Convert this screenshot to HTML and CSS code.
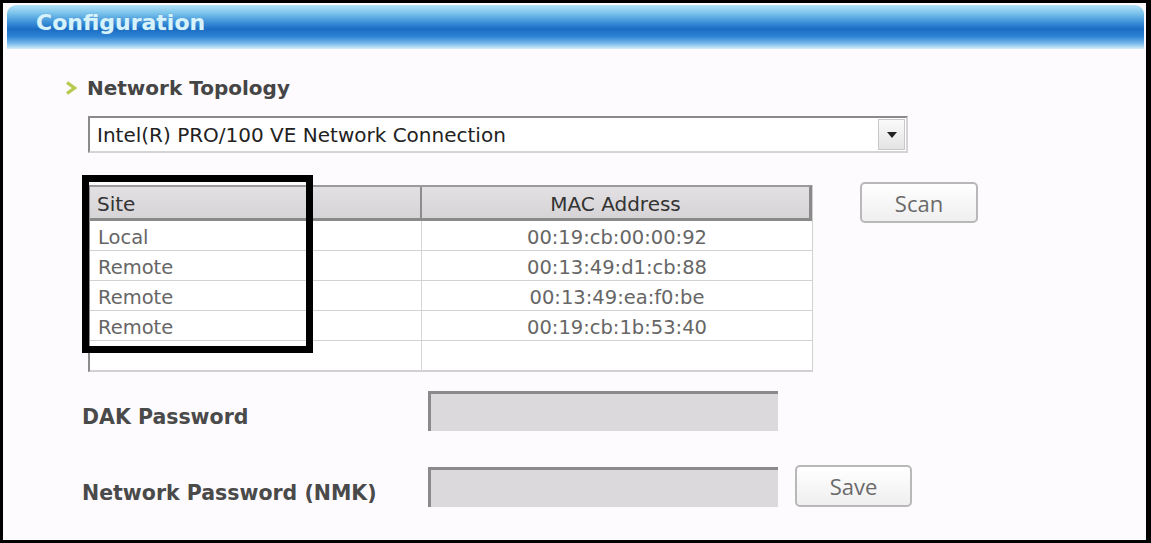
FILE: index.html
```html
<!DOCTYPE html>
<html>
<head>
<meta charset="utf-8">
<link rel="stylesheet" href="styles.css">
</head>
<body>
<div class="frame">
  <div class="header">Configuration</div>
  <div class="content">
    <div class="section-title">
      <svg class="chev" width="12" height="16" viewBox="0 0 12 16"><path d="M2 2.5 L9.5 8 L2 13.5" fill="none" stroke="#b6ca4e" stroke-width="3.4" stroke-linejoin="miter"/></svg>
      <span>Network Topology</span>
    </div>
    <div class="select">
      <span class="select-text">Intel(R) PRO/100 VE Network Connection</span>
      <span class="select-btn"><svg width="12" height="8" viewBox="0 0 12 8"><path d="M1 1 H11 L6 7 Z" fill="#222"/></svg></span>
    </div>
    <div class="table-row">
      <div class="grid">
        <div class="grid-head">
          <div class="c1">Site</div>
          <div class="c2">MAC Address</div>
        </div>
        <div class="grid-line"><div class="c1">Local</div><div class="c2">00:19:cb:00:00:92</div></div>
        <div class="grid-line"><div class="c1">Remote</div><div class="c2">00:13:49:d1:cb:88</div></div>
        <div class="grid-line"><div class="c1">Remote</div><div class="c2">00:13:49:ea:f0:be</div></div>
        <div class="grid-line"><div class="c1">Remote</div><div class="c2">00:19:cb:1b:53:40</div></div>
        <div class="grid-line"><div class="c1"></div><div class="c2"></div></div>
        <div class="highlight"></div>
      </div>
      <div class="btn scan">Scan</div>
    </div>
    <div class="field dak">
      <div class="label">DAK Password</div>
      <div class="input"></div>
    </div>
    <div class="field nmk">
      <div class="label">Network Password (NMK)</div>
      <div class="input"></div>
      <div class="btn save">Save</div>
    </div>
  </div>
</div>
</body>
</html>
```
FILE: styles.css
```css
html, body { margin: 0; padding: 0; }
body { width: 1151px; height: 543px; overflow: hidden; background: #fff; font-family: "DejaVu Sans", Verdana, sans-serif; }
.frame {
  box-sizing: border-box; width: 1151px; height: 543px;
  border: 3px solid #000; border-right-width: 5px;
  background: #fdfbfd; padding: 2px 2px 0 4px;
}
.header {
  height: 44px; border-radius: 9px 9px 0 0;
  background: linear-gradient(to bottom, #b6e4f6 0%, #7cc4ec 18%, #3a8fd8 40%, #1a6cc4 55%, #2e84d4 72%, #7cbcec 88%, #d6eef8 100%);
  color: #d6f2fa; font-weight: bold; font-size: 22px; line-height: 36px;
  padding-left: 29px;
  text-shadow: 0 0 1px #5a9ad8;
}
.content { padding-left: 75px; }
.section-title { display: flex; align-items: center; margin-top: 27px; height: 24px; margin-left: -17px; }
.chev { margin-right: 10px; }
.section-title span { font-weight: bold; font-size: 20px; color: #454545; }
.select {
  box-sizing: border-box; margin-top: 16px; margin-left: 6px; width: 820px; height: 37px;
  border: 2px solid #8a8a8a; border-right-color: #d4d4d4; border-bottom-color: #d4d4d4;
  background: #fff; display: flex; align-items: center; justify-content: space-between;
}
.select-text { font-size: 20px; color: #222; padding-left: 7px; }
.select-btn {
  box-sizing: border-box; width: 27px; height: 31px; margin-right: 1px;
  background: linear-gradient(to bottom, #fafafa, #e4e4e4);
  border: 1px solid #c8c8c8; display: flex; align-items: center; justify-content: center;
}
.table-row { display: flex; align-items: flex-start; margin-top: 29px; margin-left: 6px; }
.grid {
  position: relative; margin-top: 3px; width: 725px;
  border-left: 2px solid #8c8c8c; border-right: 1px solid #d0d0d0; border-bottom: 1px solid #d0d0d0;
  box-sizing: border-box; background: #fff;
}
.grid-head {
  display: flex; height: 36px; box-sizing: border-box;
  background: linear-gradient(to bottom, #e2e0e2, #d6d4d6);
  border-top: 2px solid #9a9a9a; border-bottom: 3px solid #8a8a8a; border-right: 3px solid #8a8a8a;
}
.grid-head .c1, .grid-head .c2 { font-size: 20px; color: #333; line-height: 31px; padding-top: 2px; }
.grid-head .c1 { border-right: 2px solid #8c8c8c; padding-left: 7px; }
.c1 { box-sizing: border-box; width: 332px; padding-left: 8px; }
.c2 { box-sizing: border-box; flex: 1; text-align: center; }
.grid-line { display: flex; height: 30px; box-sizing: border-box; border-bottom: 1px solid #d2d2d2; }
.grid-line .c1 { border-right: 1px solid #d6d6d6; padding-left: 8px; }
.grid-line .c1, .grid-line .c2 { font-size: 19.5px; color: #666; line-height: 29px; padding-top: 2px; }
.highlight {
  position: absolute; left: -8px; top: -10px; width: 231px; height: 178px;
  box-sizing: border-box; border: 7px solid #000; pointer-events: none;
}
.btn {
  box-sizing: border-box; border: 2px solid #b8b8b8; border-radius: 5px;
  background: linear-gradient(to bottom, #ffffff, #f0eff0);
  font-family: "Open Sans", "Liberation Sans", sans-serif; font-size: 22px; color: #6a6a6a;
  display: flex; align-items: center; justify-content: center;
}
.scan { width: 118px; height: 41px; margin-left: 47px; }
.field { display: flex; align-items: flex-start; }
.dak { margin-top: 19px; }
.nmk { margin-top: 36px; }
.label { width: 346px; font-weight: bold; font-size: 20.5px; color: #4a4a4a; padding-top: 14px; }
.input {
  box-sizing: border-box; width: 350px; height: 40px; background: #dcd9dc;
  border-top: 3px solid #8a8a8a; border-left: 3px solid #8a8a8a;
}
.save { width: 117px; height: 42px; margin-left: 17px; margin-top: -2px; }
```
